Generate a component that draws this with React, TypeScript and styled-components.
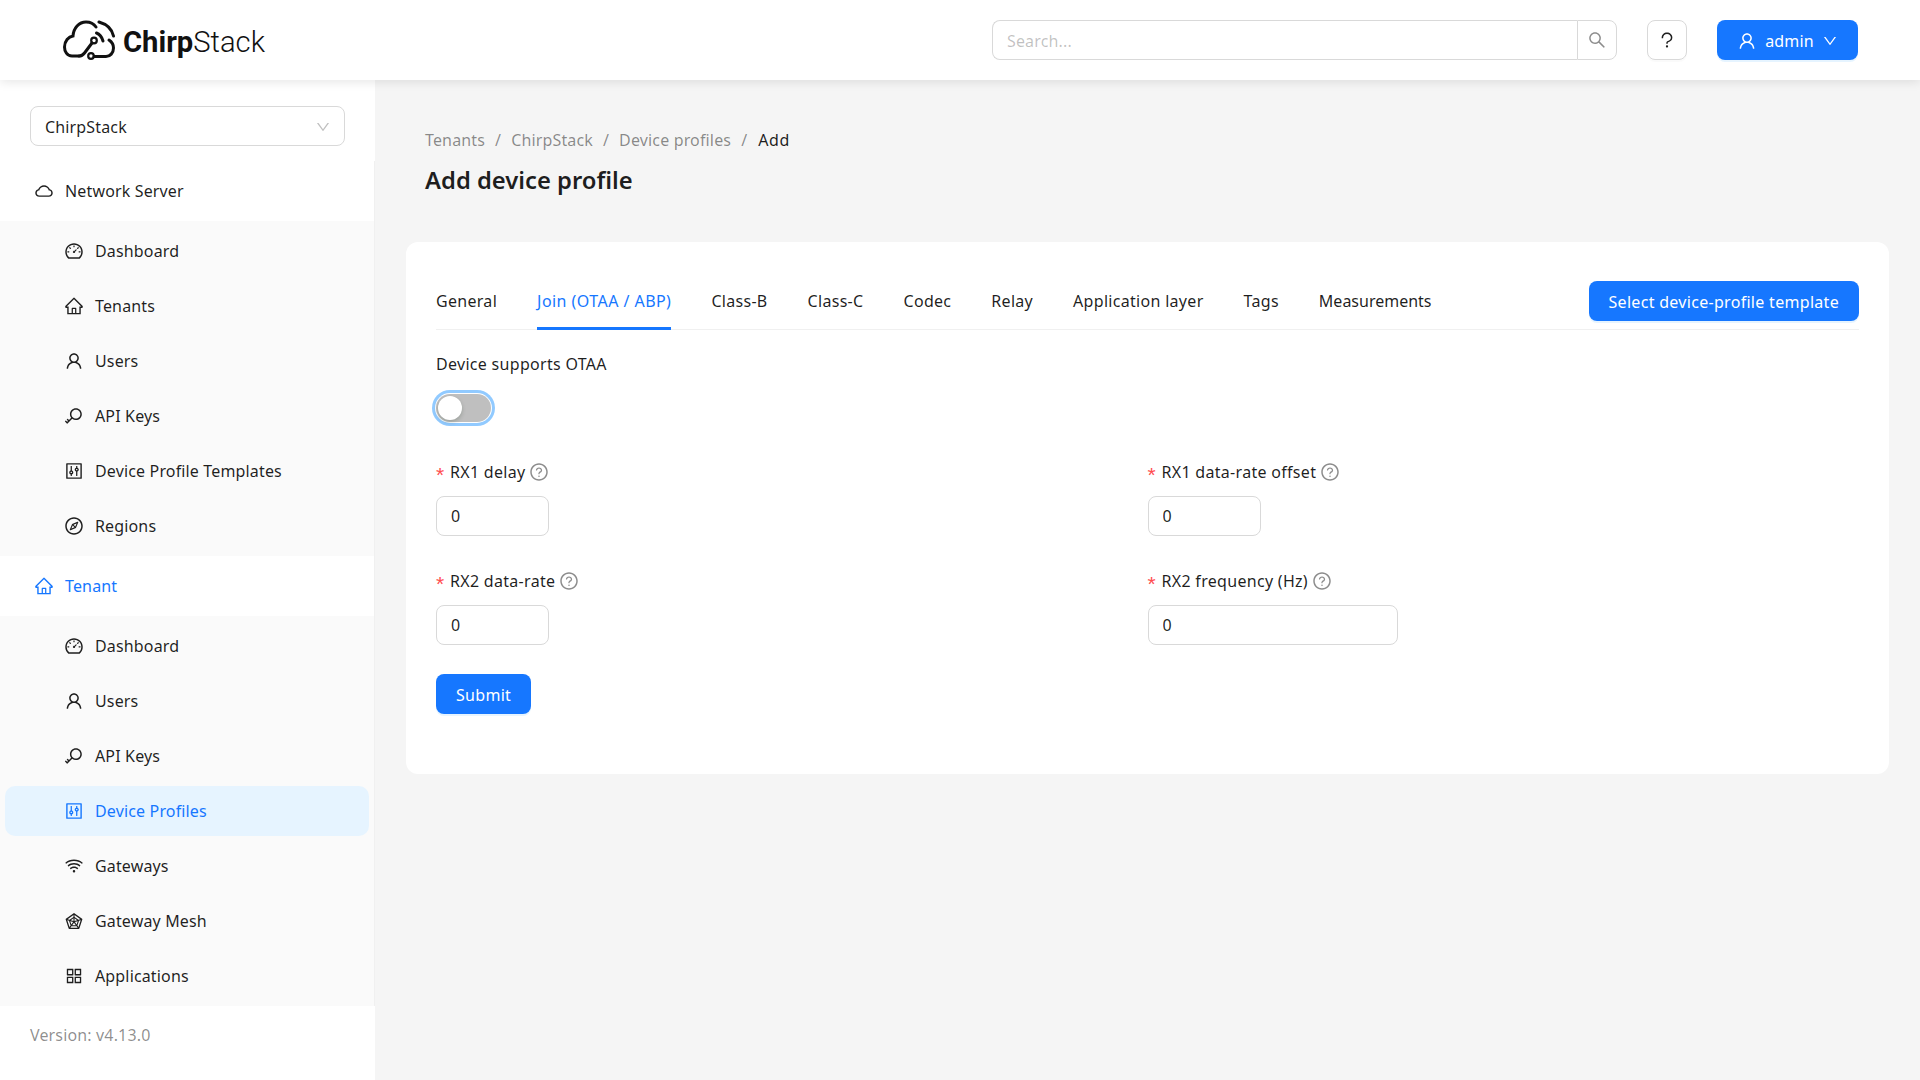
import React from 'react';
import styled, { createGlobalStyle } from 'styled-components';
import {
  AiOutlineCloud,
  AiOutlineDashboard,
  AiOutlineHome,
  AiOutlineUser,
  AiOutlineKey,
  AiOutlineControl,
  AiOutlineCompass,
  AiOutlineWifi,
  AiOutlineRadarChart,
  AiOutlineAppstore,
  AiOutlineSearch,
  AiOutlineDown,
  AiOutlineQuestion,
  AiOutlineQuestionCircle,
} from 'react-icons/ai';

const FONT = '"Noto Sans", "Open Sans", sans-serif';
const BLUE = '#1677ff';
const TEXT = 'rgba(0, 0, 0, 0.88)';

const GlobalStyle = createGlobalStyle`
  * { box-sizing: border-box; }
  html, body { margin: 0; padding: 0; }
  body {
    font-family: ${FONT};
    font-size: 16px;
    letter-spacing: 0.15px;
    color: ${TEXT};
    background: #f5f5f5;
  }
`;

const Page = styled.div`
  display: flex;
  flex-direction: column;
  height: 1080px;
  overflow: hidden;
`;

const Header = styled.header`
  position: relative;
  z-index: 2;
  flex: 0 0 80px;
  display: flex;
  align-items: center;
  padding: 0 62px 0 63px;
  background: #fff;
  box-shadow: 0 2px 10px rgba(0, 0, 0, 0.1);
`;

const Logo = styled.div`
  display: flex;
  align-items: center;
  gap: 8px;
  margin-right: auto;
`;

const LogoText = styled.span`
  font-family: Roboto, sans-serif;
  font-size: 29.2px;
  font-weight: 300;
  letter-spacing: 0;
  color: #111;
  margin-top: 3px;
  b { font-weight: 700; }
`;

const Search = styled.div`
  display: flex;
  width: 625px;
  height: 40px;
`;

const SearchInput = styled.input`
  flex: 1;
  min-width: 0;
  height: 40px;
  padding: 1px 14px 0;
  font: inherit;
  letter-spacing: inherit;
  border: 1px solid #d9d9d9;
  border-right: 0;
  border-radius: 8px 0 0 8px;
  outline: none;
  &::placeholder { color: rgba(0, 0, 0, 0.25); }
`;

const SearchButton = styled.div`
  display: flex;
  align-items: center;
  justify-content: center;
  width: 40px;
  font-size: 20px;
  color: rgba(0, 0, 0, 0.45);
  border: 1px solid #d9d9d9;
  border-radius: 0 8px 8px 0;
`;

const HelpButton = styled.div`
  display: flex;
  align-items: center;
  justify-content: center;
  width: 40px;
  height: 40px;
  margin-left: 30px;
  font-size: 20px;
  border: 1px solid #d9d9d9;
  border-radius: 8px;
  box-shadow: 0 2px 0 rgba(0, 0, 0, 0.02);
`;

const PrimaryButton = styled.div`
  display: inline-flex;
  align-items: center;
  justify-content: center;
  height: 40px;
  padding: 1px 20px 0;
  color: #fff;
  background: ${BLUE};
  border-radius: 8px;
  box-shadow: 0 2px 0 rgba(5, 145, 255, 0.1);
  white-space: nowrap;
`;

const AdminButton = styled(PrimaryButton)`
  width: 141px;
  margin-left: 30px;
  padding: 1px 0 0;
  gap: 8px;
  svg { font-size: 20px; }
`;

const AdminCaret = styled(AiOutlineDown)`
  font-size: 16px !important;
`;

const Body = styled.div`
  flex: 1;
  display: flex;
  min-height: 0;
`;

const Sider = styled.aside`
  flex: 0 0 375px;
  display: flex;
  flex-direction: column;
  background: #fff;
`;

const TenantSelect = styled.div`
  display: flex;
  align-items: center;
  justify-content: space-between;
  height: 40px;
  margin: 26px 30px 15px;
  padding: 2px 13px 0 14px;
  border: 1px solid #d9d9d9;
  border-radius: 8px;
  svg { font-size: 16px; color: rgba(0, 0, 0, 0.25); }
`;

const Menu = styled.nav`
  border-right: 1px solid #f0f0f0;
`;

const MenuTitle = styled.div<{ $active?: boolean }>`
  display: flex;
  align-items: center;
  gap: 11px;
  height: 60px;
  padding-left: 34px;
  color: ${(props) => (props.$active ? BLUE : TEXT)};
  svg { font-size: 20px; }
`;

const SubMenu = styled.div`
  display: flex;
  flex-direction: column;
  gap: 5px;
  padding: 5px;
  background: #fafafa;
`;

const MenuItem = styled.div<{ $active?: boolean }>`
  display: flex;
  align-items: center;
  gap: 11px;
  height: 50px;
  padding-left: 59px;
  border-radius: 10px;
  color: ${(props) => (props.$active ? BLUE : TEXT)};
  background: ${(props) => (props.$active ? '#e6f4ff' : 'transparent')};
  svg { font-size: 20px; }
`;

const Version = styled.div`
  padding: 18px 30px 0;
  color: rgba(0, 0, 0, 0.45);
`;

const Main = styled.main`
  flex: 1;
  min-width: 0;
  padding: 49px 31px 0;
`;

const PageHead = styled.div`
  padding-left: 19px;
  margin-bottom: 44px;
`;

const Breadcrumb = styled.div`
  display: flex;
  gap: 10px;
  line-height: 22px;
  color: rgba(0, 0, 0, 0.45);
`;

const CrumbCurrent = styled.span`
  margin-left: 1px;
  letter-spacing: 0.6px;
  color: ${TEXT};
`;

const PageTitle = styled.h1`
  margin: 11px 0 0;
  font-size: 23.8px;
  font-weight: 600;
  line-height: 36px;
  letter-spacing: 0;
`;

const Card = styled.section`
  padding: 31px 30px 60px;
  letter-spacing: 0.3px;
  background: #fff;
  border-radius: 12px;
`;

const TabBar = styled.div`
  display: flex;
  align-items: center;
  height: 57px;
  gap: 40px;
  border-bottom: 1px solid #f0f0f0;
`;

const Tab = styled.div<{ $active?: boolean }>`
  display: flex;
  align-items: center;
  height: 57px;
  letter-spacing: ${(props) => (props.$active ? '0.45px' : 'inherit')};
  color: ${(props) => (props.$active ? BLUE : TEXT)};
  box-shadow: ${(props) => (props.$active ? `inset 0 -3px 0 ${BLUE}` : 'none')};
  white-space: nowrap;
  &:nth-child(9) { letter-spacing: 0; }
`;

const TemplateButton = styled(PrimaryButton)`
  margin-left: auto;
`;

const FieldLabel = styled.label`
  display: flex;
  align-items: center;
  height: 24px;
`;

const OtaaLabel = styled(FieldLabel)`
  margin-top: 22px;
`;

const Required = styled.span`
  width: 14px;
  padding-top: 5px;
  font-family: "Liberation Sans", sans-serif;
  font-size: 21px;
  line-height: 1;
  color: #ff4d4f;
`;

const HelpIcon = styled(AiOutlineQuestionCircle)`
  margin-left: 4px;
  font-size: 20px;
  color: rgba(0, 0, 0, 0.45);
`;

const Switch = styled.div`
  position: relative;
  width: 55px;
  height: 28px;
  margin-top: 18px;
  background: #bfbfbf;
  border-radius: 14px;
  box-shadow: 0 0 0 1px #fff, 0 0 0 4px #91caff;
`;

const SwitchKnob = styled.span`
  position: absolute;
  top: 2px;
  left: 2px;
  width: 24px;
  height: 24px;
  background: #fff;
  border-radius: 50%;
  box-shadow: 0 2px 4px rgba(0, 35, 11, 0.2);
`;

const FormGrid = styled.div`
  display: grid;
  grid-template-columns: 1fr 1fr;
  row-gap: 33px;
  margin-top: 38px;
`;

const Field = styled.div`
  display: flex;
  flex-direction: column;
  gap: 12px;
`;

const NumberInput = styled.input<{ $wide?: boolean }>`
  width: ${(props) => (props.$wide ? '250px' : '113px')};
  height: 40px;
  padding: 0 14px;
  font: inherit;
  letter-spacing: inherit;
  color: ${TEXT};
  border: 1px solid #d9d9d9;
  border-radius: 8px;
  outline: none;
`;

const SubmitButton = styled(PrimaryButton)`
  margin-top: 29px;
`;

const LogoMark = () => (
  <svg width="52" height="40" viewBox="0 0 52 40" fill="none" stroke="#111" strokeWidth="3" strokeLinecap="round">
    <path d="M16 36 H9 C4 36 1.5 31.5 1.5 27 C1.5 21 5.5 16.5 10 16 C10.5 8 16 2 23 2 C27 2 31 4 33 7" />
    <path d="M36 2 C43 4 49 9 50.5 16" />
    <path d="M33.5 13 C36.5 14 39 17.5 40 21" />
    <path d="M46 20 C49 22 50.5 25 50.5 28 C50.5 33 47 36.5 43 36.5 H31" />
    <path d="M16 36 C19 36 20 35 21.5 33 L29 23" />
    <circle cx="31" cy="20.5" r="2.8" strokeWidth="2.2" />
    <circle cx="28" cy="36" r="2.8" strokeWidth="2.2" />
  </svg>
);

const networkItems = [
  { label: 'Dashboard', icon: <AiOutlineDashboard /> },
  { label: 'Tenants', icon: <AiOutlineHome /> },
  { label: 'Users', icon: <AiOutlineUser /> },
  { label: 'API Keys', icon: <AiOutlineKey /> },
  { label: 'Device Profile Templates', icon: <AiOutlineControl /> },
  { label: 'Regions', icon: <AiOutlineCompass /> },
];

const tenantItems = [
  { label: 'Dashboard', icon: <AiOutlineDashboard /> },
  { label: 'Users', icon: <AiOutlineUser /> },
  { label: 'API Keys', icon: <AiOutlineKey /> },
  { label: 'Device Profiles', icon: <AiOutlineControl />, active: true },
  { label: 'Gateways', icon: <AiOutlineWifi /> },
  { label: 'Gateway Mesh', icon: <AiOutlineRadarChart /> },
  { label: 'Applications', icon: <AiOutlineAppstore /> },
];

const tabs = ['General', 'Join (OTAA / ABP)', 'Class-B', 'Class-C', 'Codec', 'Relay', 'Application layer', 'Tags', 'Measurements'];

const fields = [
  { label: 'RX1 delay' },
  { label: 'RX1 data-rate offset' },
  { label: 'RX2 data-rate' },
  { label: 'RX2 frequency (Hz)', wide: true },
];

const App = () => {
  return (
    <Page>
      <GlobalStyle />
      <Header>
        <Logo>
          <LogoMark />
          <LogoText><b>Chirp</b>Stack</LogoText>
        </Logo>
        <Search>
          <SearchInput placeholder="Search..." readOnly />
          <SearchButton><AiOutlineSearch /></SearchButton>
        </Search>
        <HelpButton><AiOutlineQuestion /></HelpButton>
        <AdminButton><AiOutlineUser />admin<AdminCaret /></AdminButton>
      </Header>
      <Body>
        <Sider>
          <TenantSelect>ChirpStack<AiOutlineDown /></TenantSelect>
          <Menu>
            <MenuTitle><AiOutlineCloud />Network Server</MenuTitle>
            <SubMenu>
              {networkItems.map((item) => (
                <MenuItem key={item.label}>{item.icon}{item.label}</MenuItem>
              ))}
            </SubMenu>
            <MenuTitle $active><AiOutlineHome />Tenant</MenuTitle>
            <SubMenu>
              {tenantItems.map((item) => (
                <MenuItem key={item.label} $active={item.active}>{item.icon}{item.label}</MenuItem>
              ))}
            </SubMenu>
          </Menu>
          <Version>Version: v4.13.0</Version>
        </Sider>
        <Main>
          <PageHead>
            <Breadcrumb>
              <span>Tenants</span><span>/</span>
              <span>ChirpStack</span><span>/</span>
              <span>Device profiles</span><span>/</span>
              <CrumbCurrent>Add</CrumbCurrent>
            </Breadcrumb>
            <PageTitle>Add device profile</PageTitle>
          </PageHead>
          <Card>
            <TabBar>
              {tabs.map((tab) => (
                <Tab key={tab} $active={tab === 'Join (OTAA / ABP)'}>{tab}</Tab>
              ))}
              <TemplateButton>Select device-profile template</TemplateButton>
            </TabBar>
            <OtaaLabel>Device supports OTAA</OtaaLabel>
            <Switch><SwitchKnob /></Switch>
            <FormGrid>
              {fields.map((field) => (
                <Field key={field.label}>
                  <FieldLabel>
                    <Required>*</Required>
                    {field.label}
                    <HelpIcon />
                  </FieldLabel>
                  <NumberInput $wide={field.wide} value="0" readOnly />
                </Field>
              ))}
            </FormGrid>
            <SubmitButton>Submit</SubmitButton>
          </Card>
        </Main>
      </Body>
    </Page>
  );
};

export default App;
